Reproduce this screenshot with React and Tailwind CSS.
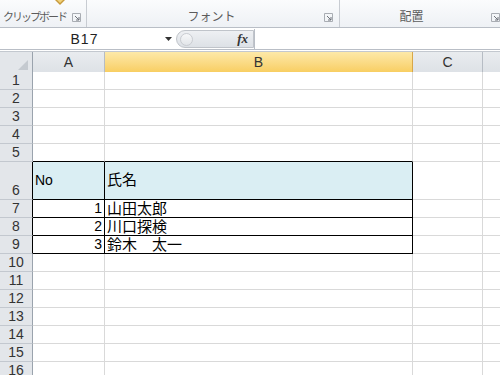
import React from 'react';

const font = { fontFamily: '"Liberation Sans", "Noto Sans CJK JP", sans-serif' };

const Launcher = () => (
    <svg width="9" height="9" viewBox="0 0 9 9" className="mb-[3px] shrink-0">
        <path d="M0.5 0.5 H8.5 V8.5 H0.5 Z" fill="none" stroke="#a9adb3" />
        <path d="M3 3 L7 7 M4 7 H7 V4" fill="none" stroke="#6e737a" strokeWidth="1" />
    </svg>
);

const Ribbon = () => (
    <div className="flex h-[28px] border-b border-[#b9bec6] bg-gradient-to-b from-[#fbfcfd] to-[#eef1f5] text-[12px] leading-[16px] text-[#5c5c5c]">
        <div className="relative flex w-[87px] items-end justify-between border-r border-[#c8ccd2] pb-[2px] pl-[3px] pr-[5px]">
            <svg width="12" height="6" viewBox="0 0 12 6" className="absolute left-[54px] top-0">
                <path d="M1 0 L6 5 L11 0 Z" fill="#c79a3c" />
                <path d="M3 0 L6 3 L9 0 Z" fill="#f1d27a" />
            </svg>
            <span className="whitespace-nowrap text-[11px] tracking-[-2px]">クリップボード</span>
            <Launcher />
        </div>
        <div className="flex w-[253px] items-end border-r border-[#c8ccd2] pb-[2px] pr-[6px]">
            <span className="flex-1 whitespace-nowrap pl-[12px] text-center">フォント</span>
            <Launcher />
        </div>
        <div className="flex flex-1 items-end pb-[2px]">
            <span className="flex-1 whitespace-nowrap pr-[8px] text-center">配置</span>
            <Launcher />
        </div>
    </div>
);

const FormulaBar = () => (
    <div className="flex h-[21px] items-stretch border-b border-[#b9bec6] bg-white">
        <div className="relative flex w-[176px] items-center">
            <span className="flex-1 pl-[4px] text-center text-[14px] tracking-[1px] text-[#222]">B17</span>
            <svg width="7" height="4" viewBox="0 0 7 4" className="mr-[4px]">
                <path d="M0 0 H7 L3.5 4 Z" fill="#333" />
            </svg>
        </div>
        <div className="my-[1px] flex w-[78px] items-center rounded-l-full border border-[#c0c4ca] bg-gradient-to-b from-[#eef0f3] to-[#dde1e6]">
            <span className="ml-[3px] h-[13px] w-[13px] rounded-full border border-[#c9ccd1] bg-gradient-to-b from-[#f7f8f9] to-[#e2e5e9]" />
            <span className="flex-1" />
            <span className="mr-[5px] text-[13px] font-bold italic text-[#333]" style={{ fontFamily: '"Liberation Serif", serif' }}>fx</span>
        </div>
        <div className="flex-1 border-l border-[#b9bec6] bg-white" />
    </div>
);

const grid = 'grid grid-cols-[33px_72px_308px_70px_1fr]';

const rows = [
    { n: 1 }, { n: 2 }, { n: 3 }, { n: 4 }, { n: 5 },
    { n: 6, a: 'No', b: '氏名', head: true },
    { n: 7, a: '1', b: '山田太郎' },
    { n: 8, a: '2', b: '川口探検' },
    { n: 9, a: '3', b: '鈴木　太一' },
    { n: 10 }, { n: 11 }, { n: 12 }, { n: 13 }, { n: 14 }, { n: 15 }, { n: 16 },
];

const Row = ({ r }) => {
    const inTable = r.n >= 6 && r.n <= 9;
    const aboveTable = r.n === 5;
    const h = r.n === 6 ? 'h-[38px]' : 'h-[18px]';
    return (
        <div className={`${grid} ${h}`}>
            <div className={`flex items-end justify-center border-b border-r border-b-[#c3c8cf] bg-[#e3e6ea] text-[14px] leading-[17px] text-[#333] ${inTable ? 'border-r-black' : 'border-r-[#9aa3ad]'}`}>
                {r.n}
            </div>
            {inTable ? (
                <>
                    <div className={`flex border-b border-r border-black px-[2px] text-[14px] text-black ${r.head ? 'items-center bg-[#daeef3] justify-start' : 'items-end justify-end bg-white leading-[17px]'}`}>
                        {r.a}
                    </div>
                    <div className={`flex whitespace-nowrap border-b border-r border-black px-[2px] text-[15px] text-black ${r.head ? 'items-center bg-[#daeef3]' : 'items-end bg-white leading-[17px]'}`}>
                        {r.b}
                    </div>
                </>
            ) : (
                <>
                    <div className={`border-r border-r-[#d9d9d9] border-b ${aboveTable ? 'border-b-black' : 'border-b-[#d9d9d9]'} bg-white`} />
                    <div className={`border-r border-r-[#d9d9d9] border-b ${aboveTable ? 'border-b-black' : 'border-b-[#d9d9d9]'} bg-white`} />
                </>
            )}
            <div className="border-b border-r border-[#d9d9d9] bg-white" />
            <div className="border-b border-[#d9d9d9] bg-white" />
        </div>
    );
};

const Sheet = () => (
    <div className="flex flex-col">
        <div className={`${grid} h-[20px] border-b border-[#9aa3ad] text-[14px] text-[#333]`}>
            <div className="relative border-r border-[#9aa3ad] bg-[#e3e6ea]">
                <svg width="10" height="10" viewBox="0 0 10 10" className="absolute bottom-[3px] right-[4px]">
                    <path d="M10 0 V10 H0 Z" fill="#c5cad0" />
                </svg>
            </div>
            <div className="flex items-center justify-center border-r border-[#b6bcc4] bg-gradient-to-b from-[#e9ecef] to-[#dde1e6]">A</div>
            <div className="flex items-center justify-center border-r border-[#d8a749] bg-gradient-to-b from-[#fde9a8] to-[#f8cd5e]">B</div>
            <div className="flex items-center justify-center border-r border-[#b6bcc4] bg-gradient-to-b from-[#e9ecef] to-[#dde1e6]">C</div>
            <div className="bg-gradient-to-b from-[#e9ecef] to-[#dde1e6]" />
        </div>
        {rows.map(r => <Row key={r.n} r={r} />)}
    </div>
);

const App = () => {
    return (
        <div className="h-[375px] w-[500px] overflow-hidden bg-white" style={font}>
            <Ribbon />
            <div className="h-[1px] bg-white" />
            <FormulaBar />
            <div className="h-[2px] border-b border-[#c3c8cf] bg-white" />
            <Sheet />
        </div>
    );
};

export default App;
